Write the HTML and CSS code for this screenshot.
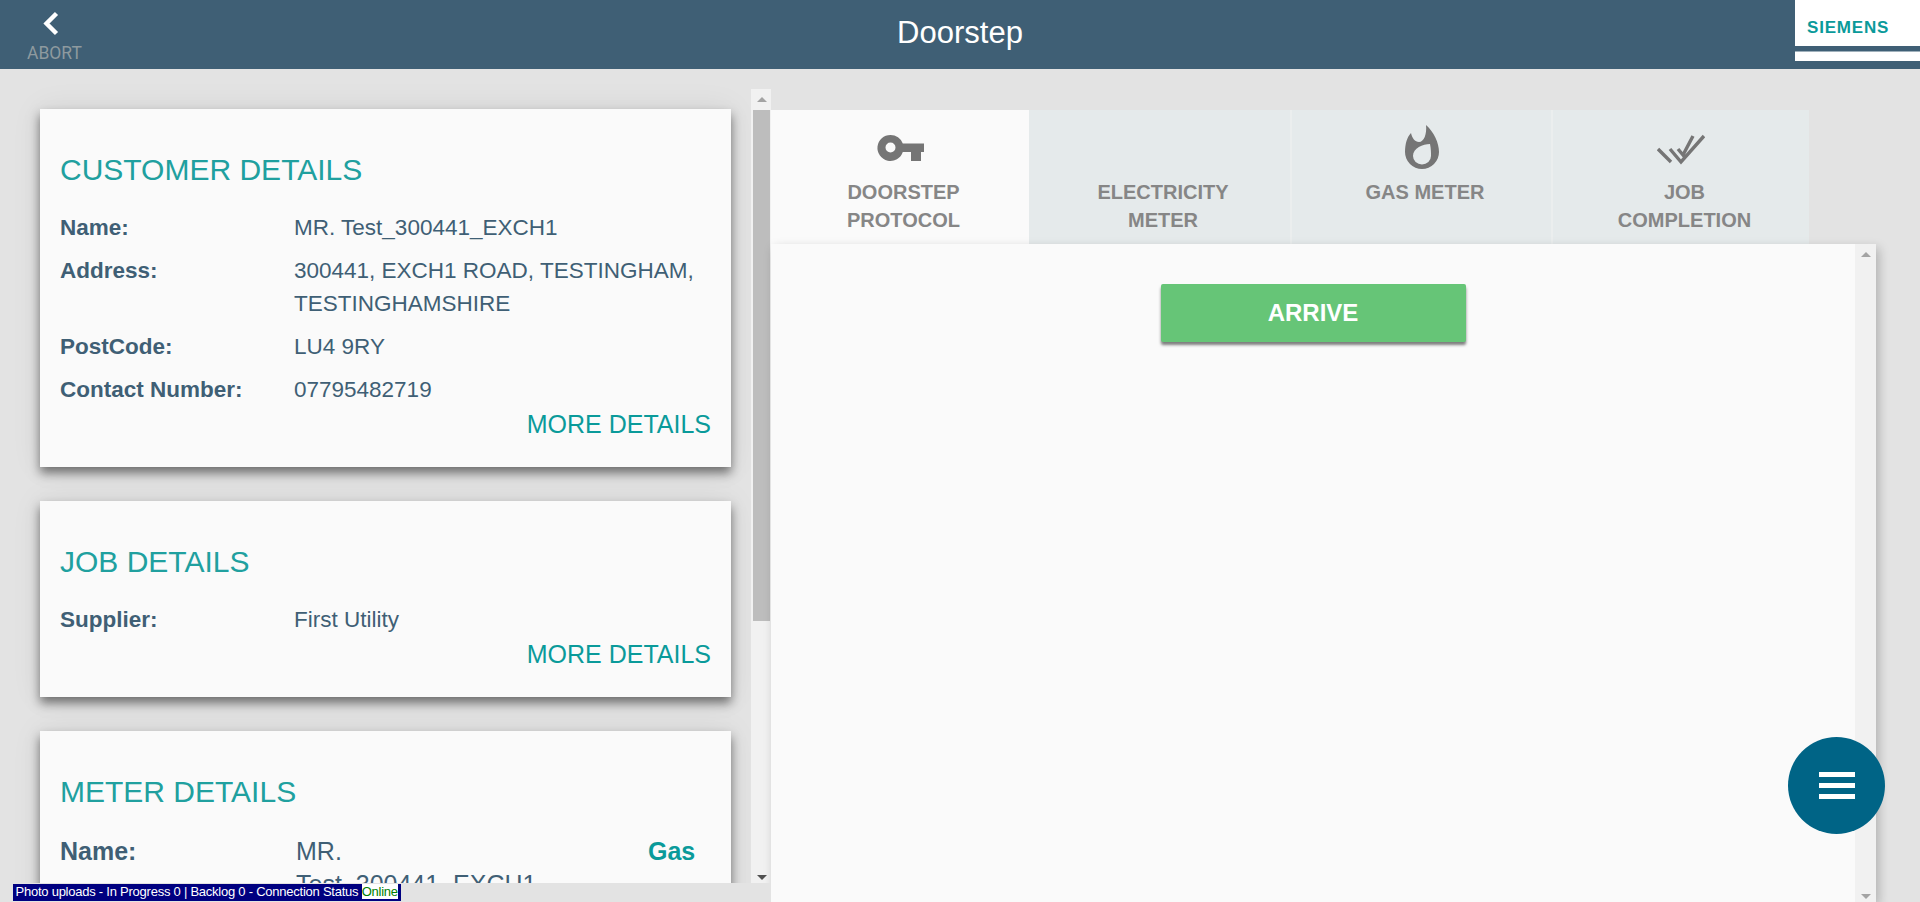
FILE: index.html
```html
<!DOCTYPE html>
<html lang="en">
<head>
<meta charset="utf-8">
<title>Doorstep</title>
<link rel="stylesheet" href="styles.css">
</head>
<body>
<header class="topbar">
  <a class="abort">
    <svg class="abort-icon" width="18" height="26" viewBox="0 0 18 26"><path d="M14.500 2.500 4.500 12.500l10 10" fill="none" stroke="#fff" stroke-width="4.400"/></svg>
    <span class="abort-label">ABORT</span>
  </a>
  <h1 class="title">Doorstep</h1>
  <div class="logo">
    <div class="logo-top"><span class="logo-text">SIEMENS</span></div>
    <div class="logo-band"></div>
    <div class="logo-foot"></div>
  </div>
</header>

<main class="workspace">
  <section class="left-pane">
    <div class="left-scroll">
      <article class="card">
        <h2 class="card-title">CUSTOMER DETAILS</h2>
        <dl class="rows">
          <div class="row"><dt>Name:</dt><dd>MR. Test_300441_EXCH1</dd></div>
          <div class="row"><dt>Address:</dt><dd>300441, EXCH1 ROAD, TESTINGHAM, TESTINGHAMSHIRE</dd></div>
          <div class="row"><dt>PostCode:</dt><dd>LU4 9RY</dd></div>
          <div class="row"><dt>Contact Number:</dt><dd>07795482719</dd></div>
        </dl>
        <a class="more">MORE DETAILS</a>
      </article>
      <article class="card">
        <h2 class="card-title">JOB DETAILS</h2>
        <dl class="rows">
          <div class="row"><dt>Supplier:</dt><dd>First Utility</dd></div>
        </dl>
        <a class="more">MORE DETAILS</a>
      </article>
      <article class="card">
        <h2 class="card-title">METER DETAILS</h2>
        <div class="meter-row">
          <span class="meter-label">Name:</span>
          <span class="meter-value">MR. Test_300441_EXCH1</span>
          <span class="meter-type">Gas</span>
        </div>
      </article>
    </div>
    <div class="scrollbar left-bar">
      <span class="arrow-up"></span>
      <div class="track"><div class="thumb"></div></div>
      <span class="arrow-down dark"></span>
    </div>
  </section>

  <section class="right-pane">
    <nav class="tabs">
      <div class="tab active">
        <svg class="tab-icon" width="48" height="48" viewBox="0 0 48 48"><path fill="#757575" fill-rule="evenodd" d="M14.500 11a13 13 0 0 1 12.300 8.500H48V28h-3v9H35v-9h-8.200A13 13 0 1 1 14.500 11Zm0 7.500a5 5 0 1 0 0 10 5 5 0 0 0 0-10Z"/></svg>
        <span class="tab-label">DOORSTEP PROTOCOL</span>
      </div>
      <div class="tab">
        <div class="tab-icon-gap"></div>
        <span class="tab-label">ELECTRICITY METER</span>
      </div>
      <div class="tab">
        <svg class="tab-icon" width="48" height="48" viewBox="0 0 48 48"><path fill="#757575" fill-rule="evenodd" d="M28 1C36 8 41 19 41 28A17 17 0 0 1 7 28C7 20 9 13 13 9 14 14 17 18 21 18 26 18 29 10 28 1ZM32 20C25 20 15 24 15 32A9 8.500 0 0 0 33 32C33 28 33 25 32 20Z"/></svg>
        <span class="tab-label">GAS METER</span>
      </div>
      <div class="tab">
        <svg class="tab-icon" width="48" height="48" viewBox="0 0 48 48"><path fill="none" stroke="#757575" stroke-width="3.400" d="M1 25l13 13M13 25l11 13L47 12M21 25l5 6 10-19"/></svg>
        <span class="tab-label">JOB COMPLETION</span>
      </div>
    </nav>
    <div class="panel">
      <div class="panel-body">
        <button class="arrive">ARRIVE</button>
      </div>
      <div class="scrollbar panel-bar">
        <span class="arrow-up"></span>
        <div class="track"></div>
        <span class="arrow-down"></span>
      </div>
    </div>
  </section>
</main>

<button class="fab" aria-label="Menu"><span></span><span></span><span></span></button>

<footer class="bottom-strip">
  <div class="status">Photo uploads - In Progress 0 | Backlog 0 - Connection Status <span class="online">Online</span></div>
</footer>
</body>
</html>
```
FILE: styles.css
```css
* { box-sizing: border-box; }
html, body { margin: 0; height: 100%; overflow: hidden; }
body {
  background: #e3e3e3;
  font-family: "Liberation Sans", Arial, sans-serif;
  color: #3f5f75;
  display: flex;
  flex-direction: column;
}
.topbar {
  height: 69px;
  flex: none;
  background: #3f5f75;
  display: grid;
  grid-template-columns: 1fr auto 1fr;
  align-items: center;
}
.abort {
  display: flex;
  flex-direction: column;
  align-items: flex-start;
  padding: 11px 0 0 27px;
  height: 69px;
}
.abort-icon { display: block; margin-left: 15px; }
.abort-label { font-family: Roboto, sans-serif; font-size: 17.500px; line-height: 20px; margin-top: 6px; color: #8e9a9f; }
.title { margin: 0; color: #fff; font-size: 31px; font-weight: 400; line-height: 66px; height: 69px; }
.logo { justify-self: end; width: 125px; height: 69px; display: flex; flex-direction: column; }
.logo-top { height: 46px; background: #fff; padding: 19px 0 0 12px; }
.logo-text { display: block; font-size: 17px; line-height: 17px; font-weight: 700; color: #0a9a9a; letter-spacing: .8px; }
.logo-band { height: 6px; border-bottom: 1px solid #9fb0bb; }
.logo-foot { height: 9px; background: #fff; }

.workspace { flex: 1; min-height: 0; display: flex; }

.left-pane { width: 771px; flex: none; display: flex; height: 814px; }
.left-scroll { width: 751px; padding: 40px 0 0 40px; overflow: hidden; flex: none; }
.card {
  width: 691px;
  margin-bottom: 34px;
  padding: 44px 20px 28px 20px;
  background: #fafafa;
  box-shadow: 0 6px 10px rgba(0,0,0,.5), 0 0 30px rgba(0,0,0,.07);
}
.card-title { margin: 0 0 24px; font-size: 30px; line-height: 34px; font-weight: 400; color: #20a09f; }
.rows { margin: 0; }
.row { display: flex; font-size: 22.500px; line-height: 33px; margin-bottom: 10px; }
.row dt { width: 234px; flex: none; font-weight: 700; }
.row dd { margin: 0; flex: 1; }
.more { display: block; text-align: right; font-size: 25px; line-height: 30px; color: #0a9a9a; margin-top: -7px; }
.meter-row { display: grid; grid-template-columns: 236px 1fr 63px; font-size: 25px; line-height: 33px; padding-top: 2px; }
.meter-label { font-weight: 700; }
.meter-value { width: 240px; }
.meter-type { font-weight: 700; color: #0a9a9a; }

.scrollbar { width: 21px; flex: none; background: #f1f1f1; display: flex; flex-direction: column; align-items: center; padding: 0 2px; }
.left-bar { margin-top: 20px; width: 20px; padding: 0 1px 0 2px; }
.track { flex: 1; width: 100%; margin: 8px 0; }
.thumb { height: 511px; background: #bdbdbd; }
.arrow-up, .arrow-down { width: 0; height: 0; border-left: 5px solid transparent; border-right: 5px solid transparent; flex: none; }
.arrow-up { border-bottom: 5px solid #a3a3a3; margin-top: 8px; }
.arrow-down { border-top: 5px solid #a3a3a3; margin-bottom: 3px; }
.arrow-down.dark { border-top-color: #505050; }

.right-pane { width: 1105px; flex: none; padding-top: 41px; display: flex; flex-direction: column; }
.tabs { display: grid; grid-template-columns: 258px 261px 261px 258px; height: 134px; flex: none; }
.tab { background: #e5eaeb; display: flex; flex-direction: column; align-items: center; padding-top: 14px; text-align: center; border-left: 2px solid #ebeeee; }
.tab.active { background: #fafafa; border-left: 0; }
.tab:nth-child(2) { border-left: 0; }
.tab-icon { display: block; flex: none; }
.tab-icon-gap { height: 48px; flex: none; }
.tab-label { font-size: 20px; line-height: 28px; font-weight: 700; color: #868686; width: 177px; padding-left: 7px; margin-top: 6px; }
.panel { flex: 1; min-height: 0; display: flex; background: #fafafa; box-shadow: 3px 4px 10px rgba(0,0,0,.22); }
.panel-body { flex: 1; display: flex; justify-content: center; align-items: flex-start; padding-top: 40px; }
.arrive { width: 305px; height: 58px; border: 0; border-radius: 2px; background: #66c577; color: #fff; font: 700 24px "Liberation Sans", Arial, sans-serif; box-shadow: 0 3px 3px rgba(0,0,0,.5); }

.fab {
  position: fixed;
  left: 1788px;
  top: 737px;
  width: 97px;
  height: 97px;
  border: 0;
  padding: 0;
  border-radius: 50%;
  background: #006486;
  display: flex;
  flex-direction: column;
  align-items: center;
  justify-content: center;
  gap: 6px;
}
.fab span { display: block; width: 36px; height: 5px; background: #fff; }

.bottom-strip { position: fixed; left: 0; bottom: 0; width: 771px; height: 19px; background: #e3e3e3; }
.status {
  position: absolute;
  left: 13px;
  top: 1px;
  height: 17px;
  width: 388px;
  padding: 0 2px 0 2.500px;
  background: #000080;
  color: #fff;
  font-size: 13px;
  letter-spacing: -.24px;
  line-height: 16px;
  white-space: nowrap;
}
.online { background: #fff; color: #008000; }
```
